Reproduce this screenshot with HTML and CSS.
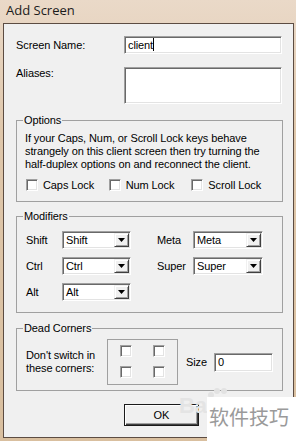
FILE: index.html
```html
<!DOCTYPE html>
<html lang="en">

<head>
    <meta charset="UTF-8">
    <title>Add Screen</title>
    <link rel="stylesheet" href="styles.css">
</head>

<body>

    <div class="window">
        <div class="titlebar">Add Screen</div>

        <div class="client">
            <div class="field-row">
                <label class="field-label">Screen Name:</label>
                <div class="textbox name-box">client<span class="caret"></span></div>
            </div>

            <div class="field-row aliases-row">
                <label class="field-label">Aliases:</label>
                <div class="textbox aliases-box"></div>
            </div>

            <fieldset class="group options">
                <legend>Options</legend>
                <p class="hint">
                    If your Caps, Num, or Scroll Lock keys behave<br>
                    strangely on this client screen then try turning the<br>
                    half-duplex options on and reconnect the client.
                </p>
                <div class="locks">
                    <label class="check"><span class="box"></span>Caps Lock</label>
                    <label class="check"><span class="box"></span>Num Lock</label>
                    <label class="check"><span class="box"></span>Scroll Lock</label>
                </div>
            </fieldset>

            <fieldset class="group modifiers">
                <legend>Modifiers</legend>
                <div class="mod-grid">
                    <span class="mod-label">Shift</span>
                    <div class="combo"><span>Shift</span><span class="arrow"><svg width="7" height="4" viewBox="0 0 7 4"><path d="M0 0h7L3.5 4z" fill="#000"/></svg></span></div>
                    <span></span>
                    <span class="mod-label">Meta</span>
                    <div class="combo"><span>Meta</span><span class="arrow"><svg width="7" height="4" viewBox="0 0 7 4"><path d="M0 0h7L3.5 4z" fill="#000"/></svg></span></div>

                    <span class="mod-label">Ctrl</span>
                    <div class="combo"><span>Ctrl</span><span class="arrow"><svg width="7" height="4" viewBox="0 0 7 4"><path d="M0 0h7L3.5 4z" fill="#000"/></svg></span></div>
                    <span></span>
                    <span class="mod-label">Super</span>
                    <div class="combo"><span>Super</span><span class="arrow"><svg width="7" height="4" viewBox="0 0 7 4"><path d="M0 0h7L3.5 4z" fill="#000"/></svg></span></div>

                    <span class="mod-label">Alt</span>
                    <div class="combo"><span>Alt</span><span class="arrow"><svg width="7" height="4" viewBox="0 0 7 4"><path d="M0 0h7L3.5 4z" fill="#000"/></svg></span></div>
                </div>
            </fieldset>

            <fieldset class="group corners">
                <legend>Dead Corners</legend>
                <div class="corner-row">
                    <p class="corner-text">Don't switch in<br>these corners:</p>
                    <div class="corner-box">
                        <span class="box"></span>
                        <span class="box"></span>
                        <span class="box"></span>
                        <span class="box"></span>
                    </div>
                    <label class="size-label">Size</label>
                    <div class="textbox size-box">0</div>
                </div>
            </fieldset>

            <div class="actions">
                <button class="ok">OK</button>
            </div>
        </div>

        <div class="mark-bai">Bai</div>
        <svg class="mark-paw" width="26" height="12" viewBox="0 0 26 12">
            <circle cx="6" cy="8" r="3" fill="#e2e2e2"/>
            <circle cx="12" cy="4" r="3" fill="#e2e2e2"/>
            <circle cx="19" cy="4" r="3" fill="#e2e2e2"/>
        </svg>
        <div class="watermark">软件技巧</div>
    </div>

</body>

</html>
```

FILE: styles.css
```css
body {
    margin: 0;
    font-family: "Liberation Sans", Arial, sans-serif;
    font-size: 11px;
    letter-spacing: -0.1px;
    color: #000;
}

.window {
    position: relative;
    width: 296px;
    height: 441px;
    display: flex;
    flex-direction: column;
    background: linear-gradient(#ead9c8, #dfc7ab 30%, #d9bf9f);
    overflow: hidden;
}

.titlebar {
    height: 23px;
    padding-left: 6px;
    line-height: 20px;
    font-family: "Open Sans", "Liberation Sans", sans-serif;
    font-size: 13px;
    letter-spacing: 0;
    color: #1b1b1b;
}

.client {
    flex: 1;
    margin: 0 2px 3px 3px;
    padding: 12px 10px 0 12px;
    border: 1px solid #5c4c42;
    background: #f0f0f0;
}

.field-row {
    display: grid;
    grid-template-columns: 108px 158px;
    align-items: center;
}

.aliases-row {
    margin-top: 13px;
    align-items: start;
}

.textbox {
    box-sizing: border-box;
    height: 18px;
    padding: 0 3px;
    line-height: 16px;
    background: #fff;
    border: 1px solid;
    border-color: #a0a0a0 #fff #fff #a0a0a0;
    box-shadow: inset 1px 1px #696969, inset -1px -1px #e3e3e3;
}

.caret {
    display: inline-block;
    width: 1px;
    height: 13px;
    vertical-align: -2px;
    background: #000;
}

.aliases-box {
    height: 37px;
}

.group {
    margin: 10px 0 0;
    padding: 0 8px;
    border: 1px solid #a0a0a0;
    min-width: 0;
}

.group legend {
    padding: 0 1px;
    margin-left: -2px;
    line-height: 13px;
}

.options {
    padding-bottom: 10px;
}

.hint {
    margin: 5px 0 0;
    line-height: 13px;
}

.locks {
    display: flex;
    height: 13px;
    margin: 7px 0 0 1px;
}

.check {
    display: flex;
    align-items: center;
    gap: 5px;
    width: 84px;
}

.box {
    box-sizing: border-box;
    width: 12px;
    height: 12px;
    background: #fff;
    border: 1px solid;
    border-color: #a0a0a0 #fff #fff #a0a0a0;
    box-shadow: inset 1px 1px #696969, inset -1px -1px #e3e3e3;
}

.modifiers {
    margin-top: 8px;
    padding-bottom: 11px;
}

.mod-grid {
    display: grid;
    grid-template-columns: 36px 69px 26px 36px 70px;
    grid-auto-rows: 18px;
    row-gap: 8px;
    align-items: center;
    margin: 8px 0 0 1px;
}

.combo {
    box-sizing: border-box;
    height: 18px;
    display: flex;
    align-items: center;
    justify-content: space-between;
    padding: 0 1px 0 3px;
    background: #fff;
    border: 1px solid;
    border-color: #a0a0a0 #fff #fff #a0a0a0;
    box-shadow: inset 1px 1px #696969, inset -1px -1px #e3e3e3;
}

.arrow {
    box-sizing: border-box;
    width: 15px;
    height: 14px;
    display: flex;
    align-items: center;
    justify-content: center;
    background: #f0f0f0;
    border: 1px solid;
    border-color: #f0f0f0 #404040 #404040 #f0f0f0;
    box-shadow: inset 1px 1px #fff, inset -1px -1px #a0a0a0;
}

.corners {
    margin-top: 9px;
    padding-bottom: 5px;
}

.corner-row {
    display: flex;
    align-items: center;
    margin: 4px 0 0 1px;
}

.corner-text {
    width: 81px;
    margin: 0;
    line-height: 13px;
}

.corner-box {
    display: grid;
    grid-template-columns: 12px 12px;
    column-gap: 21px;
    row-gap: 9px;
    padding: 5px 12px 6px;
    border: 1px solid #a0a0a0;
}

.size-label {
    margin-left: 8px;
    width: 28px;
}

.size-box {
    width: 59px;
    height: 19px;
}

.actions {
    padding: 13px 0 0 108px;
}

.ok {
    display: block;
    width: 75px;
    height: 22px;
    padding: 0;
    font-family: "Liberation Sans", Arial, sans-serif;
    font-size: 11px;
    color: #000;
    background: #f0f0f0;
    border: 1px solid #1a1a1a;
    box-shadow: inset 1px 1px #fff, inset -1px -1px #404040, inset -2px -2px #a0a0a0;
}

.mark-bai {
    position: absolute;
    left: 179px;
    top: 393px;
    font-family: "Liberation Sans", Arial, sans-serif;
    font-size: 22px;
    font-weight: bold;
    color: #e4e4e4;
}

.mark-paw {
    position: absolute;
    left: 205px;
    top: 387px;
}

.watermark {
    position: absolute;
    left: 207px;
    top: 397px;
    width: 89px;
    height: 44px;
    padding-left: 2px;
    box-sizing: border-box;
    background: #fff;
    font-family: "Noto Sans CJK SC", sans-serif;
    font-size: 20px;
    line-height: 40px;
    letter-spacing: 0;
    color: #9a9a9a;
}
```
